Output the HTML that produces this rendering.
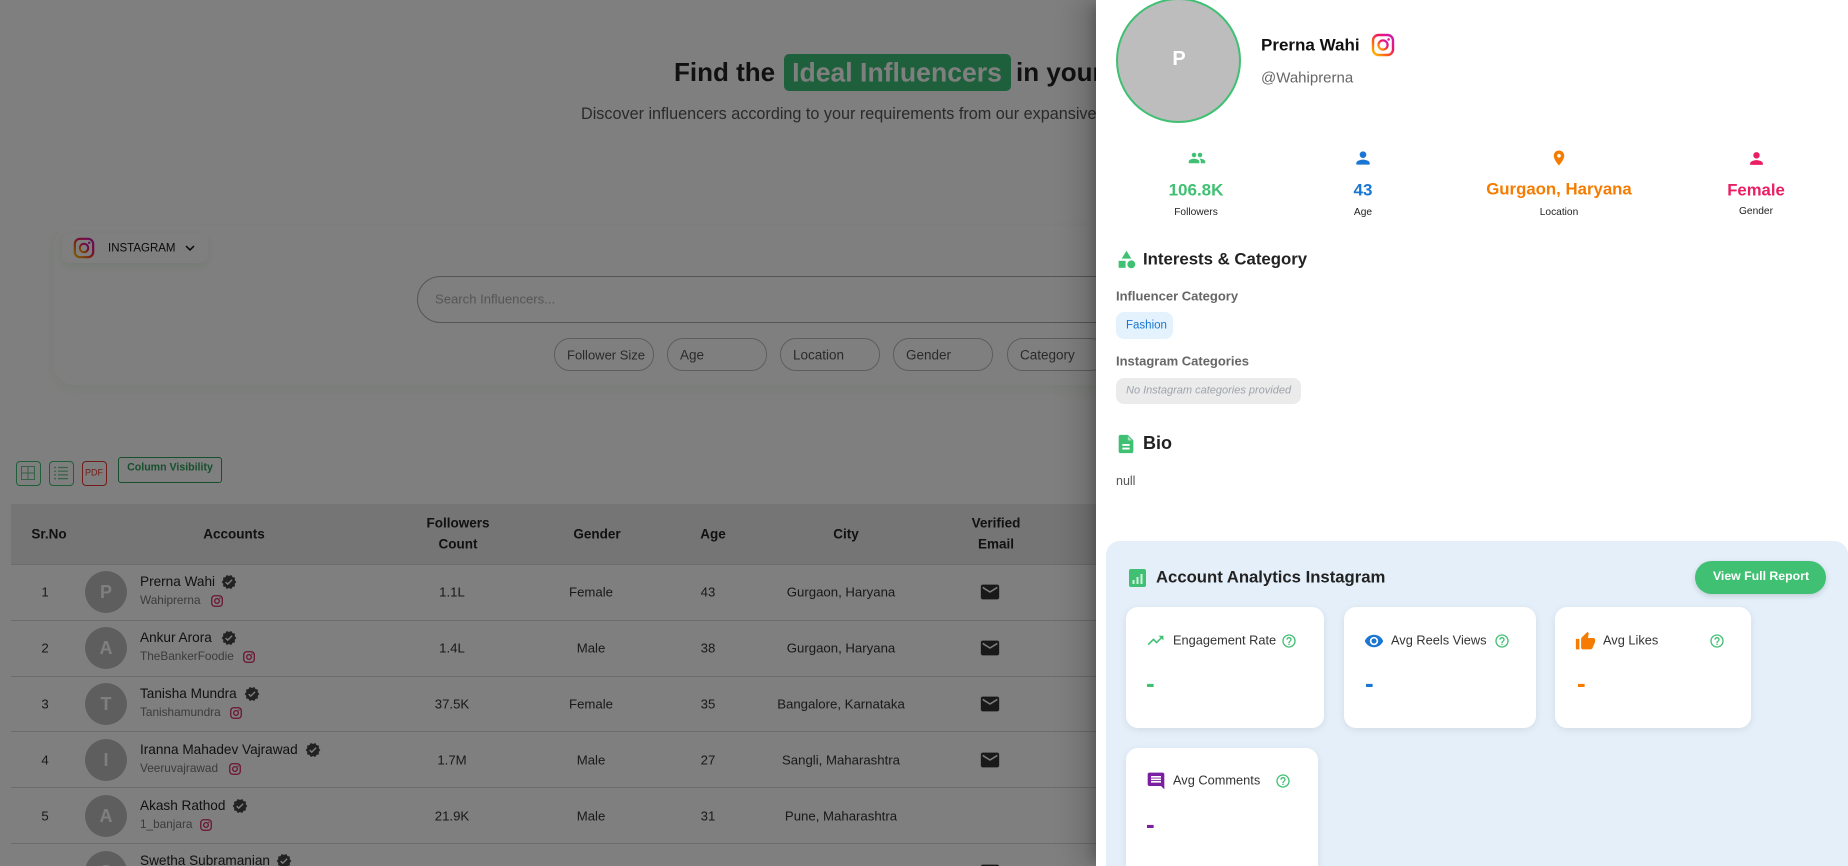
<!DOCTYPE html>
<html lang="en"><head><meta charset="utf-8"><title>Influencers</title>
<style>
html,body{margin:0;padding:0;width:1848px;height:866px;overflow:hidden;background:#fff;font-family:"Liberation Sans",sans-serif;color:#222}
#root{position:relative;width:1848px;height:866px;overflow:hidden}
.a{position:absolute}
.t{position:absolute;white-space:nowrap;line-height:1;transform:translateY(-50%)}
.c{position:absolute;white-space:nowrap;line-height:1;transform:translate(-50%,-50%);text-align:center}
.pill{position:absolute;top:338px;height:31px;width:98px;border:1px solid #bbb;border-radius:16px;background:#fff}
.pt{font-size:13.5px;color:#555;top:355px}
.th{font-size:13.5px;font-weight:bold;color:#222}
.td{font-size:13.2px;color:#333}
.line{position:absolute;left:11px;width:1100px;height:1px;background:#d8d8d8}
.av{position:absolute;left:85px;width:42px;height:42px;border-radius:50%;background:#bdbdbd;color:#fff;font-weight:bold;font-size:18px;line-height:42px;text-align:center}
.nm{font-size:13.6px;color:#222}
.un{font-size:11.8px;color:#777}
.card{position:absolute;background:#fff;border-radius:12px;box-shadow:0 2px 8px rgba(0,0,0,.08)}
.cl{font-size:12.8px;color:#333}
.dash{position:absolute;white-space:nowrap;line-height:1;font-size:26px;font-weight:bold;transform:translateY(-50%)}
svg{position:absolute;display:block}
#ov{position:absolute;left:0;top:0;width:1848px;height:866px;background:rgba(0,0,0,.5)}
#panel{position:absolute;left:1096px;top:0;width:752px;height:866px;background:#fff;box-shadow:-8px 0 10px -5px rgba(0,0,0,.2),-16px 0 24px 2px rgba(0,0,0,.14)}
</style></head><body>
<div id="root">
<svg width="0" height="0" style="position:absolute"><defs>
<linearGradient id="ig" x1="0" y1="1" x2="1" y2="0"><stop offset="0" stop-color="#fdc500"/><stop offset=".35" stop-color="#fb5a1c"/><stop offset=".65" stop-color="#f0146c"/><stop offset="1" stop-color="#c81ec0"/></linearGradient>
<symbol id="igi" viewBox="0 0 24 24"><rect x="2" y="2" width="20" height="20" rx="5.5" fill="none" stroke="url(#ig)" stroke-width="2.4"/><circle cx="12" cy="12" r="4.6" fill="none" stroke="url(#ig)" stroke-width="2.2"/><circle cx="17.6" cy="6.4" r="1.3" fill="#d81e9c"/></symbol>
<symbol id="igs" viewBox="0 0 24 24"><rect x="3" y="3" width="18" height="18" rx="5" fill="none" stroke="#d6245f" stroke-width="2.2"/><circle cx="12" cy="12" r="4" fill="none" stroke="#d6245f" stroke-width="2.2"/><circle cx="17" cy="7" r="1.2" fill="#d6245f"/></symbol>
<symbol id="ver" viewBox="0 0 24 24"><path d="M23 12l-2.44-2.79.34-3.69-3.61-.82-1.89-3.2L12 2.96 8.6 1.5 6.71 4.69 3.1 5.5l.34 3.7L1 12l2.44 2.79-.34 3.7 3.61.82L8.6 22.5l3.4-1.47 3.4 1.46 1.89-3.19 3.61-.82-.34-3.69L23 12zm-12.91 4.72l-3.8-3.81 1.48-1.48 2.32 2.33 5.85-5.87 1.48 1.48-7.33 7.35z"/></symbol>
<symbol id="mail" viewBox="0 0 24 24"><path d="M20 4H4c-1.1 0-1.99.9-1.99 2L2 18c0 1.1.9 2 2 2h16c1.1 0 2-.9 2-2V6c0-1.1-.9-2-2-2zm0 4l-8 5-8-5V6l8 5 8-5v2z"/></symbol>
<symbol id="help" viewBox="0 0 24 24"><path d="M11 18h2v-2h-2v2zm1-16C6.48 2 2 6.48 2 12s4.48 10 10 10 10-4.48 10-10S17.52 2 12 2zm0 18c-4.41 0-8-3.59-8-8s3.59-8 8-8 8 3.59 8 8-3.59 8-8 8zm0-14c-2.21 0-4 1.79-4 4h2c0-1.1.9-2 2-2s2 .9 2 2c0 2-3 1.75-3 5h2c0-2.25 3-2.5 3-5 0-2.21-1.79-4-4-4z"/></symbol>
</defs></svg>

<!-- background page -->
<div class="t" style="left:674px;top:72px;font-size:26px;font-weight:bold;color:#222">Find the</div>
<div class="a" style="left:784px;top:54px;width:227px;height:37px;border-radius:5px;background:#3ac077"></div>
<div class="c" style="left:897px;top:73px;font-size:26.6px;font-weight:bold;color:#fff">Ideal Influencers</div>
<div class="t" style="left:1016px;top:72px;font-size:26px;font-weight:bold;color:#222">in your niche</div>
<div class="t" style="left:581px;top:114px;font-size:16.2px;color:#555">Discover influencers according to your requirements from our expansive database</div>

<div class="a" style="left:54px;top:225px;width:1100px;height:160px;border-radius:20px;background:#fff;box-shadow:0 4px 14px rgba(150,210,120,.16)"></div>
<div class="a" style="left:62px;top:233px;width:146px;height:30px;border-radius:8px;background:#fff;box-shadow:0 3px 10px rgba(120,190,110,.18)"></div>
<svg style="left:73px;top:237px" width="22" height="22"><use href="#igi"/></svg>
<div class="t" style="left:108px;top:249px;font-size:11.5px;color:#111">INSTAGRAM</div>
<svg style="left:181px;top:239px" width="18" height="18" viewBox="0 0 24 24" fill="#111"><path d="M16.59 8.59L12 13.17 7.41 8.59 6 10l6 6 6-6z"/></svg>

<div class="a" style="left:417px;top:276px;width:700px;height:45px;border:1px solid #aaa;border-radius:24px;background:#fff"></div>
<div class="t" style="left:435px;top:299px;font-size:13.1px;color:#aaa">Search Influencers...</div>

<div class="pill" style="left:554px"></div><div class="t pt" style="left:567px;font-size:13px">Follower Size</div>
<div class="pill" style="left:667px"></div><div class="t pt" style="left:680px">Age</div>
<div class="pill" style="left:780px"></div><div class="t pt" style="left:793px">Location</div>
<div class="pill" style="left:893px"></div><div class="t pt" style="left:906px">Gender</div>
<div class="pill" style="left:1007px"></div><div class="t pt" style="left:1020px">Category</div>

<div class="a" style="left:16px;top:461px;width:23px;height:23px;border:1px solid #40c073;border-radius:4px"></div>
<svg style="left:21px;top:466px" width="14" height="14" viewBox="0 0 14 14" fill="none" stroke="#6cc58f" stroke-width="1"><rect x=".5" y=".5" width="13" height="13"/><path d="M7 0v14M0 7h14"/></svg>
<div class="a" style="left:49px;top:461px;width:23px;height:23px;border:1px solid #40c073;border-radius:4px"></div>
<svg style="left:54px;top:466px" width="14" height="14" viewBox="0 0 14 14" fill="none" stroke="#6cc58f" stroke-width="1.2"><path d="M4 1.5h10M4 5.2h10M4 8.9h10M4 12.6h10M0 1.5h2M0 5.2h2M0 8.9h2M0 12.6h2"/></svg>
<div class="a" style="left:82px;top:461px;width:23px;height:23px;border:1px solid #e53935;border-radius:4px"></div>
<div class="c" style="left:94px;top:473px;font-size:9px;color:#e53935">PDF</div>
<div class="a" style="left:118px;top:457px;width:102px;height:24px;border:1px solid #2e9e5b;border-radius:3px"></div>
<div class="c" style="left:170px;top:468px;font-size:10.6px;font-weight:bold;color:#2e9e5b">Column Visibility</div>

<div class="a" style="left:11px;top:504px;width:1100px;height:60px;background:#ebebeb"></div>
<div class="c th" style="left:49px;top:534px">Sr.No</div>
<div class="c th" style="left:234px;top:534px">Accounts</div>
<div class="c th" style="left:458px;top:523px">Followers</div><div class="c th" style="left:458px;top:544px">Count</div>
<div class="c th" style="left:597px;top:534px">Gender</div>
<div class="c th" style="left:713px;top:534px">Age</div>
<div class="c th" style="left:846px;top:534px">City</div>
<div class="c th" style="left:996px;top:523px">Verified</div><div class="c th" style="left:996px;top:544px">Email</div>

<div class="line" style="top:564px"></div><div class="line" style="top:620px"></div><div class="line" style="top:676px"></div><div class="line" style="top:731px"></div><div class="line" style="top:787px"></div><div class="line" style="top:843px"></div>

<!-- row 1 -->
<div class="c td" style="left:45px;top:592px">1</div>
<div class="av" style="top:571px">P</div>
<div class="t nm" style="left:140px;top:582px">Prerna Wahi</div>
<svg style="left:221px;top:574px" width="16" height="16" fill="#444"><use href="#ver"/></svg>
<div class="t un" style="left:140px;top:601px">Wahiprerna</div>
<svg style="left:210px;top:594px" width="14" height="14"><use href="#igs"/></svg>
<div class="c td" style="left:452px;top:592px">1.1L</div><div class="c td" style="left:591px;top:592px">Female</div><div class="c td" style="left:708px;top:592px">43</div><div class="c td" style="left:841px;top:592px">Gurgaon, Haryana</div>
<svg style="left:979px;top:581px" width="22" height="22" fill="#333"><use href="#mail"/></svg>
<!-- row 2 -->
<div class="c td" style="left:45px;top:648px">2</div>
<div class="av" style="top:627px">A</div>
<div class="t nm" style="left:140px;top:638px">Ankur Arora</div>
<svg style="left:221px;top:630px" width="16" height="16" fill="#444"><use href="#ver"/></svg>
<div class="t un" style="left:140px;top:657px">TheBankerFoodie</div>
<svg style="left:242px;top:650px" width="14" height="14"><use href="#igs"/></svg>
<div class="c td" style="left:452px;top:648px">1.4L</div><div class="c td" style="left:591px;top:648px">Male</div><div class="c td" style="left:708px;top:648px">38</div><div class="c td" style="left:841px;top:648px">Gurgaon, Haryana</div>
<svg style="left:979px;top:637px" width="22" height="22" fill="#333"><use href="#mail"/></svg>
<!-- row 3 -->
<div class="c td" style="left:45px;top:704px">3</div>
<div class="av" style="top:683px">T</div>
<div class="t nm" style="left:140px;top:694px">Tanisha Mundra</div>
<svg style="left:244px;top:686px" width="16" height="16" fill="#444"><use href="#ver"/></svg>
<div class="t un" style="left:140px;top:713px">Tanishamundra</div>
<svg style="left:229px;top:706px" width="14" height="14"><use href="#igs"/></svg>
<div class="c td" style="left:452px;top:704px">37.5K</div><div class="c td" style="left:591px;top:704px">Female</div><div class="c td" style="left:708px;top:704px">35</div><div class="c td" style="left:841px;top:704px">Bangalore, Karnataka</div>
<svg style="left:979px;top:693px" width="22" height="22" fill="#333"><use href="#mail"/></svg>
<!-- row 4 -->
<div class="c td" style="left:45px;top:760px">4</div>
<div class="av" style="top:739px">I</div>
<div class="t nm" style="left:140px;top:750px">Iranna Mahadev Vajrawad</div>
<svg style="left:305px;top:742px" width="16" height="16" fill="#444"><use href="#ver"/></svg>
<div class="t un" style="left:140px;top:769px">Veeruvajrawad</div>
<svg style="left:228px;top:762px" width="14" height="14"><use href="#igs"/></svg>
<div class="c td" style="left:452px;top:760px">1.7M</div><div class="c td" style="left:591px;top:760px">Male</div><div class="c td" style="left:708px;top:760px">27</div><div class="c td" style="left:841px;top:760px">Sangli, Maharashtra</div>
<svg style="left:979px;top:749px" width="22" height="22" fill="#333"><use href="#mail"/></svg>
<!-- row 5 -->
<div class="c td" style="left:45px;top:816px">5</div>
<div class="av" style="top:795px">A</div>
<div class="t nm" style="left:140px;top:806px">Akash Rathod</div>
<svg style="left:232px;top:798px" width="16" height="16" fill="#444"><use href="#ver"/></svg>
<div class="t un" style="left:140px;top:825px">1_banjara</div>
<svg style="left:199px;top:818px" width="14" height="14"><use href="#igs"/></svg>
<div class="c td" style="left:452px;top:816px">21.9K</div><div class="c td" style="left:591px;top:816px">Male</div><div class="c td" style="left:708px;top:816px">31</div><div class="c td" style="left:841px;top:816px">Pune, Maharashtra</div>
<!-- row 6 -->
<div class="av" style="top:851px">S</div>
<div class="t nm" style="left:140px;top:861px">Swetha Subramanian</div>
<svg style="left:276px;top:853px" width="16" height="16" fill="#444"><use href="#ver"/></svg>
<svg style="left:979px;top:861px" width="22" height="22" fill="#333"><use href="#mail"/></svg>

<div id="ov"></div>

<!-- drawer -->
<div id="panel"></div>
<div class="a" style="left:1116px;top:-2px;width:121px;height:121px;border:2px solid #40c073;border-radius:50%;background:#bdbdbd"></div>
<div class="c" style="left:1179px;top:59px;font-size:20px;font-weight:bold;color:#fff">P</div>
<div class="t" style="left:1261px;top:45px;font-size:17px;font-weight:bold;color:#111">Prerna Wahi</div>
<svg style="left:1371px;top:33px" width="24" height="24"><use href="#igi"/></svg>
<div class="t" style="left:1261px;top:78px;font-size:15px;color:#666">@Wahiprerna</div>

<svg style="left:1188px;top:149px" width="18" height="18" viewBox="0 0 24 24" fill="#40c073"><path d="M16 11c1.66 0 2.99-1.34 2.99-3S17.66 5 16 5c-1.66 0-3 1.34-3 3s1.34 3 3 3zm-8 0c1.66 0 2.99-1.34 2.99-3S9.66 5 8 5C6.34 5 5 6.34 5 8s1.34 3 3 3zm0 2c-2.33 0-7 1.17-7 3.5V19h14v-2.5c0-2.33-4.67-3.5-7-3.5zm8 0c-.29 0-.62.02-.97.05 1.16.84 1.97 1.97 1.97 3.45V19h6v-2.5c0-2.33-4.67-3.5-7-3.5z"/></svg>
<div class="c" style="left:1196px;top:190px;font-size:17px;font-weight:bold;color:#40c073">106.8K</div>
<div class="c" style="left:1196px;top:213px;font-size:10.2px;color:#222">Followers</div>
<svg style="left:1353px;top:148px" width="20" height="20" viewBox="0 0 24 24" fill="#1976d2"><path d="M12 12c2.21 0 4-1.79 4-4s-1.79-4-4-4-4 1.79-4 4 1.79 4 4 4zm0 2c-2.67 0-8 1.34-8 4v2h16v-2c0-2.66-5.33-4-8-4z"/></svg>
<div class="c" style="left:1363px;top:190px;font-size:17px;font-weight:bold;color:#1976d2">43</div>
<div class="c" style="left:1363px;top:213px;font-size:10.2px;color:#222">Age</div>
<svg style="left:1550px;top:149px" width="18" height="18" viewBox="0 0 24 24" fill="#f57c00"><path d="M12 2C8.13 2 5 5.13 5 9c0 5.25 7 13 7 13s7-7.75 7-13c0-3.87-3.13-7-7-7zm0 9.5c-1.38 0-2.5-1.12-2.5-2.5s1.12-2.5 2.5-2.5 2.5 1.12 2.5 2.5-1.12 2.5-2.5 2.5z"/></svg>
<div class="c" style="left:1559px;top:190px;font-size:16.8px;font-weight:bold;color:#f57c00">Gurgaon, Haryana</div>
<div class="c" style="left:1559px;top:213px;font-size:10.2px;color:#222">Location</div>
<svg style="left:1747px;top:149px" width="19" height="19" viewBox="0 0 24 24" fill="#e91e63"><path d="M12 12c2.21 0 4-1.79 4-4s-1.79-4-4-4-4 1.79-4 4 1.79 4 4 4zm0 2c-2.67 0-8 1.34-8 4v2h16v-2c0-2.66-5.33-4-8-4z"/></svg>
<div class="c" style="left:1756px;top:191px;font-size:16.7px;font-weight:bold;color:#e91e63">Female</div>
<div class="c" style="left:1756px;top:212px;font-size:10.2px;color:#222">Gender</div>

<svg style="left:1116px;top:249px" width="21" height="21" viewBox="0 0 24 24" fill="#40c073"><path d="M12 2l-5.5 9h11z"/><circle cx="17.5" cy="17.5" r="4.5"/><path d="M3 13.5h8v8H3z"/></svg>
<div class="t" style="left:1143px;top:260px;font-size:16.8px;font-weight:bold;color:#222">Interests &amp; Category</div>
<div class="t" style="left:1116px;top:296px;font-size:13px;font-weight:bold;color:#666">Influencer Category</div>
<div class="a" style="left:1116px;top:312px;width:57px;height:27px;border-radius:8px;background:#e3f2fd"></div>
<div class="t" style="left:1126px;top:326px;font-size:11.5px;color:#1976d2">Fashion</div>
<div class="t" style="left:1116px;top:361px;font-size:13px;font-weight:bold;color:#666">Instagram Categories</div>
<div class="a" style="left:1116px;top:378px;width:185px;height:26px;border-radius:8px;background:#ebebeb"></div>
<div class="t" style="left:1126px;top:391px;font-size:11px;font-style:italic;color:#9ea3ab">No Instagram categories provided</div>
<svg style="left:1115px;top:433px" width="22" height="22" viewBox="0 0 24 24" fill="#40c073"><path fill-rule="evenodd" d="M14 2H6c-1.1 0-1.99.9-1.99 2L4 20c0 1.1.89 2 1.99 2H18c1.1 0 2-.9 2-2V8l-6-6zm2 16H8v-2h8v2zm0-4H8v-2h8v2z"/><path d="M14 3.5L18.5 8H14z" fill="#a6e4bf"/></svg>
<div class="t" style="left:1143px;top:443px;font-size:18px;font-weight:bold;color:#222">Bio</div>
<div class="t" style="left:1116px;top:481px;font-size:12.5px;color:#555">null</div>

<div class="a" style="left:1106px;top:541px;width:742px;height:325px;border-radius:14px 14px 0 0;background:#e4eff9"></div>
<svg style="left:1129px;top:569px" width="17" height="18" viewBox="0 0 17 18"><rect width="17" height="18" rx="2" fill="#40c073"/><path d="M3.5 11h2v4h-2zM7.5 8h2v7h-2zM11.5 5h2v10h-2z" fill="#d5f3e1"/></svg>
<div class="t" style="left:1156px;top:578px;font-size:16.7px;font-weight:bold;color:#222">Account Analytics Instagram</div>
<div class="a" style="left:1695px;top:561px;width:131px;height:33px;border-radius:17px;background:#40c073;box-shadow:0 2px 6px rgba(0,0,0,.15)"></div>
<div class="c" style="left:1761px;top:576px;font-size:12.3px;font-weight:bold;color:#fff">View Full Report</div>

<div class="card" style="left:1126px;top:607px;width:198px;height:121px"></div>
<div class="card" style="left:1344px;top:607px;width:192px;height:121px"></div>
<div class="card" style="left:1555px;top:607px;width:196px;height:121px"></div>
<div class="card" style="left:1126px;top:748px;width:192px;height:150px"></div>

<svg style="left:1146px;top:631px" width="19" height="19" viewBox="0 0 24 24" fill="#40c073"><path d="M16 6l2.29 2.29-4.88 4.88-4-4L2 16.59 3.41 18l6-6 4 4 6.3-6.29L22 12V6z"/></svg>
<div class="t cl" style="left:1173px;top:641px">Engagement Rate</div>
<svg style="left:1281px;top:633px" width="16" height="16" fill="#40c073"><use href="#help"/></svg>
<div class="dash" style="left:1146px;top:683px;color:#40c073">-</div>

<svg style="left:1364px;top:631px" width="20" height="20" viewBox="0 0 24 24" fill="#1976d2"><path d="M12 4.5C7 4.5 2.73 7.61 1 12c1.73 4.39 6 7.5 11 7.5s9.27-3.11 11-7.5c-1.73-4.39-6-7.5-11-7.5zM12 17c-2.76 0-5-2.24-5-5s2.24-5 5-5 5 2.24 5 5-2.24 5-5 5zm0-8c-1.66 0-3 1.34-3 3s1.34 3 3 3 3-1.34 3-3-1.34-3-3-3z"/></svg>
<div class="t cl" style="left:1391px;top:641px">Avg Reels Views</div>
<svg style="left:1494px;top:633px" width="16" height="16" fill="#40c073"><use href="#help"/></svg>
<div class="dash" style="left:1365px;top:683px;color:#1976d2">-</div>

<svg style="left:1575px;top:631px" width="21" height="21" viewBox="0 0 24 24" fill="#f57c00"><path d="M1 21h4V9H1v12zm22-11c0-1.1-.9-2-2-2h-6.31l.95-4.57.03-.32c0-.41-.17-.79-.44-1.06L14.17 1 7.59 7.59C7.22 7.95 7 8.45 7 9v10c0 1.1.9 2 2 2h9c.83 0 1.54-.5 1.84-1.22l3.02-7.05c.09-.23.14-.47.14-.73v-2z"/></svg>
<div class="t cl" style="left:1603px;top:641px">Avg Likes</div>
<svg style="left:1709px;top:633px" width="16" height="16" fill="#40c073"><use href="#help"/></svg>
<div class="dash" style="left:1577px;top:683px;color:#f57c00">-</div>

<svg style="left:1146px;top:771px" width="20" height="20" viewBox="0 0 24 24" fill="#7b1fa2"><path d="M21.99 4c0-1.1-.89-2-1.99-2H4c-1.1 0-2 .9-2 2v12c0 1.1.9 2 2 2h14l4 4-.01-18zM18 14H6v-2h12v2zm0-3H6V9h12v2zm0-3H6V6h12v2z"/></svg>
<div class="t cl" style="left:1173px;top:781px">Avg Comments</div>
<svg style="left:1275px;top:773px" width="16" height="16" fill="#40c073"><use href="#help"/></svg>
<div class="dash" style="left:1146px;top:824px;color:#7b1fa2">-</div>
</div>
</body></html>
